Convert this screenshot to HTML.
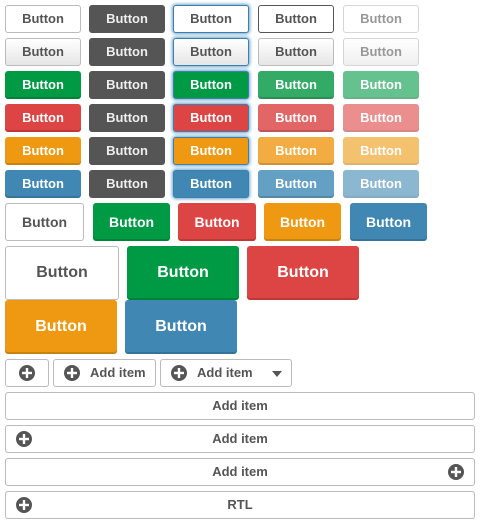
<!DOCTYPE html>
<html><head><meta charset="utf-8"><style>
body{margin:0;width:480px;height:524px;background:#fff;position:relative;font-family:"Liberation Sans",sans-serif;overflow:hidden}
.b{position:absolute;box-sizing:border-box;border-radius:3px;font-weight:bold;font-size:13px;display:flex;align-items:center;justify-content:center;color:#fff;height:28px;width:76px;padding-bottom:1px}
.d{background:#fff;border:1px solid #bbb;color:#555}
.g{background:linear-gradient(#fff,#e6e6e6);border:1px solid #bbb;color:#555}
.k{background:#555;color:#eee}
.f{box-shadow:0 0 3px 1px #6aa5cc;border:1px solid #3d7fae}
.gr{background:#009944;box-shadow:inset 0 -2px 0 rgba(0,0,0,.15)}
.rd{background:#dd4444;box-shadow:inset 0 -2px 0 rgba(0,0,0,.15)}
.or{background:#ee9911;box-shadow:inset 0 -2px 0 rgba(0,0,0,.15)}
.bl{background:#4088b3;box-shadow:inset 0 -2px 0 rgba(0,0,0,.15)}
.f.gr,.f.rd,.f.or,.f.bl{box-shadow:0 0 3px 1px #6aa5cc}
.x{opacity:.6}
.m{height:38px;font-size:14px}
.l{height:54px;font-size:16px}
.w{left:5px;width:470px;background:#fff;border:1px solid #bbb;color:#555}
.ic{position:absolute;width:16px;height:16px}
</style></head><body>
<div class="b d" style="left:5px;top:5px">Button</div>
<div class="b k" style="left:89px;top:5px">Button</div>
<div class="b d f" style="left:173px;top:5px">Button</div>
<div class="b d" style="left:258px;top:5px;border-color:#555">Button</div>
<div class="b d x" style="left:343px;top:5px">Button</div>
<div class="b g" style="left:5px;top:38px">Button</div>
<div class="b k" style="left:89px;top:38px">Button</div>
<div class="b g f" style="left:173px;top:38px">Button</div>
<div class="b g" style="left:258px;top:38px">Button</div>
<div class="b g x" style="left:343px;top:38px">Button</div>
<div class="b gr" style="left:5px;top:71px">Button</div>
<div class="b k" style="left:89px;top:71px">Button</div>
<div class="b gr f" style="left:173px;top:71px">Button</div>
<div class="b gr" style="left:258px;top:71px;background:#33aa66">Button</div>
<div class="b gr x" style="left:343px;top:71px">Button</div>
<div class="b rd" style="left:5px;top:104px">Button</div>
<div class="b k" style="left:89px;top:104px">Button</div>
<div class="b rd f" style="left:173px;top:104px">Button</div>
<div class="b rd" style="left:258px;top:104px;background:#e36666">Button</div>
<div class="b rd x" style="left:343px;top:104px">Button</div>
<div class="b or" style="left:5px;top:137px">Button</div>
<div class="b k" style="left:89px;top:137px">Button</div>
<div class="b or f" style="left:173px;top:137px">Button</div>
<div class="b or" style="left:258px;top:137px;background:#f2ac42">Button</div>
<div class="b or x" style="left:343px;top:137px">Button</div>
<div class="b bl" style="left:5px;top:170px">Button</div>
<div class="b k" style="left:89px;top:170px">Button</div>
<div class="b bl f" style="left:173px;top:170px">Button</div>
<div class="b bl" style="left:258px;top:170px;background:#63a0c3">Button</div>
<div class="b bl x" style="left:343px;top:170px">Button</div>
<div class="b d m" style="left:5px;top:203px;width:79px">Button</div>
<div class="b gr m" style="left:93px;top:203px;width:77px">Button</div>
<div class="b rd m" style="left:178px;top:203px;width:78px">Button</div>
<div class="b or m" style="left:264px;top:203px;width:77px">Button</div>
<div class="b bl m" style="left:350px;top:203px;width:77px">Button</div>
<div class="b d l" style="left:5px;top:246px;width:114px">Button</div>
<div class="b gr l" style="left:127px;top:246px;width:112px">Button</div>
<div class="b rd l" style="left:247px;top:246px;width:112px">Button</div>
<div class="b or l" style="left:5px;top:300px;width:112px">Button</div>
<div class="b bl l" style="left:125px;top:300px;width:112px">Button</div>
<svg width="0" height="0" style="position:absolute"><defs><symbol id="p" viewBox="0 0 16 16"><circle cx="8" cy="8" r="8" fill="#555"/><rect x="3" y="6.8" width="10" height="2.4" fill="#fff"/><rect x="6.8" y="3" width="2.4" height="10" fill="#fff"/></symbol></defs></svg>
<div class="b d" style="left:5px;top:359px;width:44px"><svg class="ic" style="left:13px;top:5px"><use href="#p"/></svg></div>
<div class="b d" style="left:53px;top:359px;width:103px;justify-content:flex-start;padding-left:36px">Add item<svg class="ic" style="left:10px;top:5px"><use href="#p"/></svg></div>
<div class="b d" style="left:160px;top:359px;width:132px;justify-content:flex-start;padding-left:36px">Add item<svg class="ic" style="left:10px;top:5px"><use href="#p"/></svg><span style="position:absolute;left:111px;top:11px;width:0;height:0;border-left:5px solid transparent;border-right:5px solid transparent;border-top:6px solid #555"></span></div>
<div class="b w" style="top:392px">Add item</div>
<div class="b w" style="top:425px">Add item<svg class="ic" style="left:10px;top:5px"><use href="#p"/></svg></div>
<div class="b w" style="top:458px">Add item<svg class="ic" style="left:442px;top:5px"><use href="#p"/></svg></div>
<div class="b w" style="top:491px">RTL<svg class="ic" style="left:10px;top:5px"><use href="#p"/></svg></div>
</body></html>
